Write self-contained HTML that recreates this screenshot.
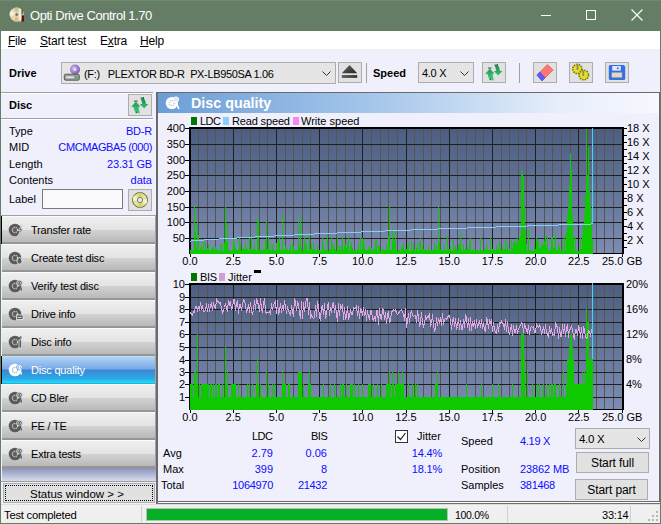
<!DOCTYPE html>
<html><head><meta charset="utf-8">
<style>
*{margin:0;padding:0;box-sizing:border-box}
html,body{width:661px;height:524px;overflow:hidden;background:#f0f0fc;font-family:"Liberation Sans",sans-serif;font-size:11px;color:#000}
.a{position:absolute}
.t{position:absolute;white-space:pre;line-height:1}
.ax{position:absolute;white-space:pre;font-size:11px;line-height:12px;color:#000}
.blue{color:#0c0cff}
.btn{position:absolute;background:#e1e1e1;border:1px solid #adadad}
.nav{position:absolute;left:2px;width:154px;height:28px;background:linear-gradient(#fbfbfb 0px,#fbfbfb 1px,#efefef 1px,#e3e3e3 14px,#d3d3d3 14px,#b8b8b8 26px,#9c9c9c 26px,#909090 28px);box-shadow:inset -1px 0 #a4a4a4}
.nav .lbl{position:absolute;left:29px;top:9px;font-size:11px;white-space:pre;line-height:1;letter-spacing:-0.2px}
.nav svg{position:absolute;left:7px;top:7px}
</style></head><body>
<!-- title bar -->
<div class="a" style="left:0;top:0;width:661px;height:31px;background:#657d65;border-top:1px solid #71886f"></div>
<svg class="a" style="left:9px;top:7px" width="17" height="16" viewBox="0 0 17 16">
 <circle cx="7.7" cy="7.6" r="7.1" fill="#e6d8ac"/>
 <path d="M7.7 7.6L2 3.5A7 7 0 0 0 0.8 9Z" fill="#f8f0d4"/><path d="M7.7 7.6L12.5 12.6A7 7 0 0 0 14.6 8Z" fill="#f6ecc8"/>
 <path d="M7.7 7.6L5 0.9A7 7 0 0 1 10 0.9Z" fill="#d2c08a"/><path d="M7.7 7.6L10 14.3A7 7 0 0 1 5 14.3Z" fill="#d2c08a"/>
 <circle cx="7.7" cy="7.6" r="1.9" fill="#6a7a6a" stroke="#e0e0e0" stroke-width="0.9"/>
 <path d="M10.8 2L11.4 14.5" stroke="#f0f0f0" stroke-width="1.6"/><rect x="12.6" y="8.3" width="2.4" height="6.2" fill="#6a0a0a"/><rect x="12.6" y="2.5" width="1" height="5" fill="#303030"/>
</svg>
<div class="t" style="left:30px;top:9px;font-size:13px;color:#fff;letter-spacing:-0.45px">Opti Drive Control 1.70</div>
<div class="a" style="left:541px;top:15px;width:10px;height:1px;background:#fff"></div>
<div class="a" style="left:586px;top:10px;width:10px;height:10px;border:1px solid #fff"></div>
<svg class="a" style="left:631px;top:9px" width="12" height="12"><path d="M0.5 0.5L11.5 11.5M11.5 0.5L0.5 11.5" stroke="#fff" stroke-width="1.1"/></svg>
<!-- window border -->
<div class="a" style="left:0;top:31px;width:1px;height:493px;background:#657d65"></div>
<div class="a" style="left:660px;top:31px;width:1px;height:493px;background:#657d65"></div>
<div class="a" style="left:0;top:523px;width:661px;height:1px;background:#657d65"></div>
<!-- menu -->
<div class="a" style="left:1px;top:31px;width:659px;height:18px;background:#fff"></div>
<div class="a" style="left:1px;top:49px;width:659px;height:1px;background:#f0f0f0"></div>
<div class="t" style="left:8px;top:35px;font-size:12px;letter-spacing:-0.3px"><u>F</u>ile</div>
<div class="t" style="left:40px;top:35px;font-size:12px;letter-spacing:-0.2px"><u>S</u>tart test</div>
<div class="t" style="left:100px;top:35px;font-size:12px;letter-spacing:-0.2px">E<u>x</u>tra</div>
<div class="t" style="left:140px;top:35px;font-size:12px;letter-spacing:-0.2px"><u>H</u>elp</div>
<!-- toolbar -->
<div class="t" style="left:9px;top:68px;font-size:11px;font-weight:bold">Drive</div>
<div class="btn" style="left:61px;top:62px;width:275px;height:22px;background:#e5e5e5;border-color:#acacac"></div>
<svg class="a" style="left:63px;top:63px" width="18" height="18" viewBox="0 0 18 18">
 <defs><radialGradient id="dv" cx="0.4" cy="0.4" r="0.7"><stop offset="0" stop-color="#d8c8f0"/><stop offset="0.6" stop-color="#9878c8"/><stop offset="1" stop-color="#6a50a0"/></radialGradient></defs>
 <circle cx="12" cy="6.5" r="5" fill="url(#dv)"/><circle cx="12" cy="6.5" r="1.2" fill="#f0e8ff"/>
 <rect x="1.3" y="11.2" width="15" height="6" rx="1.3" fill="#9a9a9a" stroke="#505050" stroke-width="0.9"/><rect x="3.2" y="13.4" width="7.5" height="1.8" fill="#e8e8e8"/><circle cx="13.5" cy="14.3" r="1.1" fill="#20c040"/>
</svg>
<div class="t" style="left:84px;top:69px;font-size:11px;letter-spacing:-0.35px">(F:)   PLEXTOR BD-R  PX-LB950SA 1.06</div>
<svg class="a" style="left:322px;top:71px" width="9" height="5"><path d="M0.5 0.5L4.5 4.5L8.5 0.5" fill="none" stroke="#333" stroke-width="1"/></svg>
<div class="btn" style="left:338px;top:62px;width:24px;height:21px;background:#e1e1e1"></div>
<svg class="a" style="left:338px;top:62px" width="24" height="21" viewBox="0 0 24 21">
 <defs><linearGradient id="ej" x1="0" y1="0" x2="1" y2="1"><stop offset="0" stop-color="#707070"/><stop offset="1" stop-color="#202020"/></linearGradient></defs>
 <path d="M11.5 3L19.2 11.3H3.8Z" fill="url(#ej)"/><rect x="3.8" y="13" width="15.4" height="2.8" fill="url(#ej)"/>
</svg>
<div class="a" style="left:366px;top:63px;width:1px;height:20px;background:#a0a0a0"></div>
<div class="t" style="left:373px;top:68px;font-size:11px;font-weight:bold">Speed</div>
<div class="btn" style="left:418px;top:62px;width:56px;height:21px;background:#e5e5e5;border-color:#acacac"></div>
<div class="t" style="left:422px;top:68px;font-size:11px;letter-spacing:-0.3px">4.0 X</div>
<svg class="a" style="left:460px;top:71px" width="9" height="5"><path d="M0.5 0.5L4.5 4.5L8.5 0.5" fill="none" stroke="#333" stroke-width="1"/></svg>
<div class="btn" style="left:482px;top:62px;width:24px;height:21px"></div>
<svg class="a" style="left:482px;top:62px" width="24" height="21" viewBox="0 0 24 21">
 <defs><linearGradient id="ga1" x1="0" y1="0" x2="0" y2="1"><stop offset="0" stop-color="#1e9a50"/><stop offset="1" stop-color="#40d080"/></linearGradient>
 <linearGradient id="gb1" x1="0" y1="0" x2="0" y2="1"><stop offset="0" stop-color="#20804a"/><stop offset="1" stop-color="#38c870"/></linearGradient></defs>
 <path d="M7.9 6.8L12.6 11.7L10.4 11.7Q10.9 15 12 18.2L7.4 18.2Q6.3 14.8 5.3 11.7L3.2 11.7Z" fill="url(#ga1)"/>
 <path d="M12.4 2.6L15.6 2.6Q17.4 5.5 18.1 9L20.5 9L16.2 13.6L11.8 9L14.2 9Q13.6 5.6 12.4 2.6Z" fill="url(#gb1)"/>
 <rect x="6" y="5.6" width="3.5" height="1" fill="#404040"/><rect x="15" y="2" width="1" height="1.5" fill="#505050"/><rect x="8" y="16.5" width="1" height="1.5" fill="#505050"/>
</svg>
<div class="a" style="left:519px;top:63px;width:1px;height:20px;background:#a0a0a0"></div>
<div class="btn" style="left:533px;top:62px;width:24px;height:21px"></div>
<svg class="a" style="left:533px;top:62px" width="24" height="21" viewBox="0 0 24 21">
 <path d="M14.5 2.5L20.2 8L12.1 15.9L6.8 10.1Z" fill="#ff7676" stroke="#c04848" stroke-width="0.5"/>
 <path d="M6.8 10.1L12.1 15.9L9 19L3.8 13Z" fill="#5a5aff" stroke="#3030b0" stroke-width="0.5"/>
</svg>
<div class="btn" style="left:569px;top:62px;width:24px;height:21px"></div>
<svg class="a" style="left:569px;top:62px" width="24" height="21" viewBox="0 0 24 21">
 <circle cx="8.3" cy="7" r="4.6" fill="#e6e020" stroke="#7a7410" stroke-width="1.6" stroke-dasharray="1.5 1"/>
 <circle cx="14.8" cy="13" r="4.8" fill="#e6e020" stroke="#7a7410" stroke-width="1.6" stroke-dasharray="1.5 1"/>
 <rect x="7.6" y="3" width="1.8" height="5" fill="#8a8a80"/><rect x="13.4" y="9" width="1.8" height="5" fill="#8a8a80"/>
</svg>
<div class="btn" style="left:605px;top:62px;width:24px;height:21px"></div>
<svg class="a" style="left:605px;top:62px" width="24" height="21" viewBox="0 0 24 21">
 <path d="M5.2 3H18.6L20.2 4.6V16.4Q20.2 18 18.6 18H5.4Q3.8 18 3.8 16.4V4.6Q3.8 3 5.2 3Z" fill="#2f6ff0"/>
 <rect x="7.2" y="4" width="8.6" height="4.6" fill="#e4e8f0"/><circle cx="12.8" cy="6.3" r="1" fill="#2f6ff0"/>
 <rect x="6.3" y="10.1" width="11" height="5.8" fill="#d8d8d8" stroke="#707070" stroke-width="0.8"/>
</svg>

<!-- left panel -->
<div class="a" style="left:1px;top:92px;width:152px;height:1px;background:#a0a0a0"></div>
<div class="a" style="left:1px;top:93px;width:152px;height:1px;background:#fff"></div>
<div class="t" style="left:9px;top:100px;font-size:11px;font-weight:bold">Disc</div>
<div class="btn" style="left:128px;top:94px;width:24px;height:22px"></div>
<svg class="a" style="left:128px;top:95px" width="24" height="21" viewBox="0 0 24 21">
 <defs><linearGradient id="ga2" x1="0" y1="0" x2="0" y2="1"><stop offset="0" stop-color="#1e9a50"/><stop offset="1" stop-color="#40d080"/></linearGradient>
 <linearGradient id="gb2" x1="0" y1="0" x2="0" y2="1"><stop offset="0" stop-color="#20804a"/><stop offset="1" stop-color="#38c870"/></linearGradient></defs>
 <path d="M7.9 6.8L12.6 11.7L10.4 11.7Q10.9 15 12 18.2L7.4 18.2Q6.3 14.8 5.3 11.7L3.2 11.7Z" fill="url(#ga2)"/>
 <path d="M12.4 2.6L15.6 2.6Q17.4 5.5 18.1 9L20.5 9L16.2 13.6L11.8 9L14.2 9Q13.6 5.6 12.4 2.6Z" fill="url(#gb2)"/>
 <rect x="6" y="5.6" width="3.5" height="1" fill="#404040"/><rect x="15" y="2" width="1" height="1.5" fill="#505050"/><rect x="8" y="16.5" width="1" height="1.5" fill="#505050"/>
</svg>
<div class="a" style="left:1px;top:118px;width:152px;height:1px;background:#a0a0a0"></div>
<div class="a" style="left:1px;top:119px;width:152px;height:1px;background:#fff"></div>
<div class="t" style="left:9px;top:126px">Type</div>
<div class="t blue" style="left:51px;top:126px;width:101px;text-align:right;letter-spacing:-0.2px">BD-R</div>
<div class="t" style="left:9px;top:142px">MID</div>
<div class="t blue" style="left:41px;top:142px;width:111px;text-align:right;letter-spacing:-0.4px">CMCMAGBA5 (000)</div>
<div class="t" style="left:9px;top:159px">Length</div>
<div class="t blue" style="left:51px;top:159px;width:101px;text-align:right;letter-spacing:-0.2px">23.31 GB</div>
<div class="t" style="left:9px;top:175px">Contents</div>
<div class="t blue" style="left:51px;top:175px;width:101px;text-align:right">data</div>
<div class="t" style="left:9px;top:194px">Label</div>
<div class="a" style="left:42px;top:189px;width:81px;height:20px;background:#fafafd;border:1px solid #7a7a7a"></div>
<div class="btn" style="left:128px;top:189px;width:24px;height:22px"></div>
<svg class="a" style="left:128px;top:189px" width="24" height="22" viewBox="0 0 24 22">
 <circle cx="12" cy="11" r="7.5" fill="#e2e290" stroke="#505038" stroke-width="0.9"/>
 <path d="M12 11L6 6.5A7.3 7.3 0 0 0 4.8 12Z" fill="#f4f4c8"/><path d="M12 11L18 15.5A7.3 7.3 0 0 0 19.2 10Z" fill="#f4f4c8"/>
 <path d="M12 11L9.5 3.9A7.3 7.3 0 0 1 14.5 3.9Z" fill="#cfcf78"/><path d="M12 11L14.5 18.1A7.3 7.3 0 0 1 9.5 18.1Z" fill="#cfcf78"/>
 <circle cx="12" cy="11" r="2.6" fill="#e6ece0" stroke="#6a6e78" stroke-width="0.9"/>
</svg>
<div class="a" style="left:1px;top:215px;width:155px;height:1px;background:#a0a0a0"></div>

<div class="nav" style="top:216px"><div style="position:absolute;left:-1px;top:0;width:1px;height:28px;background:#000"></div><svg width="18" height="16" viewBox="0 0 18 16" style="left:5px;top:6px"><circle cx="8" cy="8" r="6.3" fill="#5c5c5c"/><circle cx="8" cy="8" r="2.6" fill="none" stroke="#d8d8d8" stroke-width="1.2" stroke-dasharray="1.2 0.9"/><path d="M15.5 1.5L11.5 8.5L13.5 8.5L10.5 14.5L16 7L14 7Z" fill="#5c5c5c" stroke="#e0e0e0" stroke-width="0.8"/></svg><div class="lbl" style="color:#000">Transfer rate</div></div><div class="nav" style="top:244px"><svg width="18" height="16" viewBox="0 0 18 16" style="left:5px;top:6px"><circle cx="8" cy="8" r="6.3" fill="#5c5c5c"/><circle cx="8" cy="8" r="2.6" fill="none" stroke="#d8d8d8" stroke-width="1.2" stroke-dasharray="1.2 0.9"/><path d="M12.5 7Q15 9 15 11.5Q15 14 12.5 14Q10 14 10 11.5Q10 9 12.5 7Z" fill="#5c5c5c" stroke="#e0e0e0" stroke-width="0.9"/></svg><div class="lbl" style="color:#000">Create test disc</div></div><div class="nav" style="top:272px"><svg width="18" height="16" viewBox="0 0 18 16" style="left:5px;top:6px"><circle cx="8" cy="8" r="6.3" fill="#5c5c5c"/><circle cx="8" cy="8" r="2.6" fill="none" stroke="#d8d8d8" stroke-width="1.2" stroke-dasharray="1.2 0.9"/><circle cx="12.5" cy="5" r="2.8" fill="#5c5c5c" stroke="#e0e0e0" stroke-width="0.9"/><circle cx="12.5" cy="5" r="1.3" fill="none" stroke="#d8d8d8" stroke-width="0.7"/><path d="M13 7.5L14.5 12.5" stroke="#5c5c5c" stroke-width="1.4"/></svg><div class="lbl" style="color:#000">Verify test disc</div></div><div class="nav" style="top:300px"><svg width="18" height="16" viewBox="0 0 18 16" style="left:5px;top:6px"><circle cx="8" cy="8" r="6.3" fill="#5c5c5c"/><circle cx="8" cy="8" r="2.6" fill="none" stroke="#d8d8d8" stroke-width="1.2" stroke-dasharray="1.2 0.9"/><rect x="9.5" y="9" width="6.5" height="4.5" fill="#5c5c5c" stroke="#e0e0e0" stroke-width="0.9"/><rect x="10.5" y="11" width="4" height="1" fill="#d8d8d8"/></svg><div class="lbl" style="color:#000">Drive info</div></div><div class="nav" style="top:328px"><svg width="18" height="16" viewBox="0 0 18 16" style="left:5px;top:6px"><circle cx="8" cy="8" r="6.3" fill="#5c5c5c"/><circle cx="8" cy="8" r="2.6" fill="none" stroke="#d8d8d8" stroke-width="1.2" stroke-dasharray="1.2 0.9"/><rect x="12" y="6" width="2.6" height="8" fill="#5c5c5c" stroke="#e0e0e0" stroke-width="0.8"/><rect x="12.5" y="2.5" width="2" height="2" fill="#5c5c5c"/></svg><div class="lbl" style="color:#000">Disc info</div></div><div class="nav" style="top:356px;background:linear-gradient(#cfe6fb 0%,#b0d2f4 4%,#7aaae6 46%,#3f86d2 50%,#2aa8e6 80%,#1edcfa 96%,#2a8ab8 100%)"><div style="position:absolute;left:-1px;top:0;width:1px;height:28px;background:#000"></div><svg width="18" height="16" viewBox="0 0 18 16" style="left:5px;top:6px"><circle cx="8" cy="8" r="6.3" fill="#fff"/><circle cx="8" cy="8" r="2.6" fill="none" stroke="#7fb0e6" stroke-width="1.2" stroke-dasharray="1.2 0.9"/><circle cx="12.5" cy="5" r="2.8" fill="#fff" stroke="#6aa4e0" stroke-width="0.9"/><circle cx="12.5" cy="5" r="1.3" fill="none" stroke="#7fb0e6" stroke-width="0.7"/><path d="M13 7.5L14.5 12.5" stroke="#fff" stroke-width="1.4"/></svg><div class="lbl" style="color:#fff">Disc quality</div></div><div class="nav" style="top:384px"><svg width="18" height="16" viewBox="0 0 18 16" style="left:5px;top:6px"><circle cx="8" cy="8" r="6.3" fill="#5c5c5c"/><circle cx="8" cy="8" r="2.6" fill="none" stroke="#d8d8d8" stroke-width="1.2" stroke-dasharray="1.2 0.9"/><circle cx="12.5" cy="5" r="2.8" fill="#5c5c5c" stroke="#e0e0e0" stroke-width="0.9"/><circle cx="12.5" cy="5" r="1.3" fill="none" stroke="#d8d8d8" stroke-width="0.7"/><path d="M13 7.5L14.5 12.5" stroke="#5c5c5c" stroke-width="1.4"/></svg><div class="lbl" style="color:#000">CD Bler</div></div><div class="nav" style="top:412px"><svg width="18" height="16" viewBox="0 0 18 16" style="left:5px;top:6px"><circle cx="8" cy="8" r="6.3" fill="#5c5c5c"/><circle cx="8" cy="8" r="2.6" fill="none" stroke="#d8d8d8" stroke-width="1.2" stroke-dasharray="1.2 0.9"/><circle cx="12.5" cy="5" r="2.8" fill="#5c5c5c" stroke="#e0e0e0" stroke-width="0.9"/><circle cx="12.5" cy="5" r="1.3" fill="none" stroke="#d8d8d8" stroke-width="0.7"/><path d="M13 7.5L14.5 12.5" stroke="#5c5c5c" stroke-width="1.4"/></svg><div class="lbl" style="color:#000">FE / TE</div></div><div class="nav" style="top:440px"><svg width="18" height="16" viewBox="0 0 18 16" style="left:5px;top:6px"><circle cx="8" cy="8" r="6.3" fill="#5c5c5c"/><circle cx="8" cy="8" r="2.6" fill="none" stroke="#d8d8d8" stroke-width="1.2" stroke-dasharray="1.2 0.9"/><circle cx="12.5" cy="5" r="2.8" fill="#5c5c5c" stroke="#e0e0e0" stroke-width="0.9"/><circle cx="12.5" cy="5" r="1.3" fill="none" stroke="#d8d8d8" stroke-width="0.7"/><path d="M13 7.5L14.5 12.5" stroke="#5c5c5c" stroke-width="1.4"/></svg><div class="lbl" style="color:#000">Extra tests</div></div>

<div class="a" style="left:2px;top:468px;width:154px;height:13px;background:linear-gradient(#8a94b8,#d8dcec)"></div>
<div class="a" style="left:1px;top:481px;width:155px;height:1px;background:#a0a0a0"></div>
<div class="btn" style="left:3px;top:483px;width:152px;height:20px;background:#e1e1e1"></div>
<div class="a" style="left:5px;top:485px;width:148px;height:16px;border:1px dotted #000"></div>
<div class="t" style="left:1px;top:489px;width:152px;text-align:center;font-size:11.5px">Status window &gt; &gt;</div>

<!-- left/right separator -->
<div class="a" style="left:156px;top:92px;width:2px;height:411px;background:#6a6a6a"></div>
<!-- main panel frame -->
<div class="a" style="left:156px;top:92px;width:504px;height:1px;background:#6a6a6a"></div>
<div class="a" style="left:659px;top:92px;width:1px;height:411px;background:#6a6a6a"></div>
<div class="a" style="left:156px;top:501px;width:504px;height:1px;background:#6a6a6a"></div><div class="a" style="left:158px;top:502px;width:502px;height:1px;background:#fff"></div><div class="a" style="left:156px;top:503px;width:504px;height:1px;background:#707070"></div><div class="a" style="left:156px;top:501px;width:2px;height:3px;background:#6a6a6a"></div>
<div class="a" style="left:158px;top:93px;width:501px;height:20px;background:linear-gradient(90deg,#6c9ed6 0%,#a8c8ec 45%,#e6eefa 80%,#f8f8fe 100%)"></div>
<svg class="a" style="left:163px;top:95px" width="18" height="16" viewBox="0 0 18 16">
 <circle cx="8.8" cy="8.1" r="6.1" fill="#fff"/><circle cx="8.8" cy="8.1" r="2.6" fill="none" stroke="#9cc0e8" stroke-width="1.2" stroke-dasharray="1 1"/>
 <circle cx="13" cy="4.5" r="2.6" fill="#dfe9f6" stroke="#fff" stroke-width="1"/><path d="M13.2 7L15.8 14" stroke="#fff" stroke-width="1.6"/>
</svg>
<div class="t" style="left:191px;top:96px;font-size:14.3px;font-weight:bold;color:#fff">Disc quality</div>

<!-- legends -->
<div class="a" style="left:191px;top:117px;width:6px;height:8px;background:#007800"></div>
<div class="t" style="left:200px;top:116px;letter-spacing:-0.5px">LDC</div>
<div class="a" style="left:223px;top:117px;width:6px;height:8px;background:#88d0f8"></div>
<div class="t" style="left:232px;top:116px;letter-spacing:-0.15px">Read speed</div>
<div class="a" style="left:293px;top:117px;width:6px;height:8px;background:#f888f0"></div>
<div class="t" style="left:301px;top:116px">Write speed</div>

<div class="a" style="left:191px;top:273px;width:6px;height:8px;background:#007800"></div>
<div class="t" style="left:200px;top:272px;letter-spacing:-0.3px">BIS</div>
<div class="a" style="left:219px;top:273px;width:6px;height:8px;background:#d0a0d0"></div>
<div class="t" style="left:228px;top:272px">Jitter</div>
<div class="a" style="left:254px;top:270px;width:7px;height:3px;background:#000"></div>

<svg width="661" height="524" style="position:absolute;left:0;top:0">
<defs><linearGradient id="pg" x1="0" y1="0" x2="0" y2="1"><stop offset="0" stop-color="#4e5e80"/><stop offset="1" stop-color="#7c8cb2"/></linearGradient></defs>
<rect x="191" y="129" width="431" height="124" fill="url(#pg)"/><rect x="198" y="129" width="1" height="124" fill="#555555"/><rect x="207" y="129" width="1" height="124" fill="#555555"/><rect x="215" y="129" width="1" height="124" fill="#555555"/><rect x="224" y="129" width="1" height="124" fill="#555555"/><rect x="233" y="129" width="1" height="124" fill="#202020"/><rect x="241" y="129" width="1" height="124" fill="#555555"/><rect x="250" y="129" width="1" height="124" fill="#555555"/><rect x="259" y="129" width="1" height="124" fill="#555555"/><rect x="267" y="129" width="1" height="124" fill="#555555"/><rect x="276" y="129" width="1" height="124" fill="#202020"/><rect x="285" y="129" width="1" height="124" fill="#555555"/><rect x="293" y="129" width="1" height="124" fill="#555555"/><rect x="302" y="129" width="1" height="124" fill="#555555"/><rect x="310" y="129" width="1" height="124" fill="#555555"/><rect x="319" y="129" width="1" height="124" fill="#202020"/><rect x="328" y="129" width="1" height="124" fill="#555555"/><rect x="336" y="129" width="1" height="124" fill="#555555"/><rect x="345" y="129" width="1" height="124" fill="#555555"/><rect x="354" y="129" width="1" height="124" fill="#555555"/><rect x="362" y="129" width="1" height="124" fill="#202020"/><rect x="371" y="129" width="1" height="124" fill="#555555"/><rect x="380" y="129" width="1" height="124" fill="#555555"/><rect x="388" y="129" width="1" height="124" fill="#555555"/><rect x="397" y="129" width="1" height="124" fill="#555555"/><rect x="406" y="129" width="1" height="124" fill="#202020"/><rect x="414" y="129" width="1" height="124" fill="#555555"/><rect x="423" y="129" width="1" height="124" fill="#555555"/><rect x="431" y="129" width="1" height="124" fill="#555555"/><rect x="440" y="129" width="1" height="124" fill="#555555"/><rect x="449" y="129" width="1" height="124" fill="#202020"/><rect x="457" y="129" width="1" height="124" fill="#555555"/><rect x="466" y="129" width="1" height="124" fill="#555555"/><rect x="475" y="129" width="1" height="124" fill="#555555"/><rect x="483" y="129" width="1" height="124" fill="#555555"/><rect x="492" y="129" width="1" height="124" fill="#202020"/><rect x="501" y="129" width="1" height="124" fill="#555555"/><rect x="509" y="129" width="1" height="124" fill="#555555"/><rect x="518" y="129" width="1" height="124" fill="#555555"/><rect x="526" y="129" width="1" height="124" fill="#555555"/><rect x="535" y="129" width="1" height="124" fill="#202020"/><rect x="544" y="129" width="1" height="124" fill="#555555"/><rect x="552" y="129" width="1" height="124" fill="#555555"/><rect x="561" y="129" width="1" height="124" fill="#555555"/><rect x="570" y="129" width="1" height="124" fill="#555555"/><rect x="578" y="129" width="1" height="124" fill="#202020"/><rect x="587" y="129" width="1" height="124" fill="#555555"/><rect x="596" y="129" width="1" height="124" fill="#555555"/><rect x="604" y="129" width="1" height="124" fill="#555555"/><rect x="613" y="129" width="1" height="124" fill="#555555"/><rect x="191" y="144" width="431" height="1" fill="#202020"/><rect x="191" y="160" width="431" height="1" fill="#202020"/><rect x="191" y="175" width="431" height="1" fill="#202020"/><rect x="191" y="191" width="431" height="1" fill="#202020"/><rect x="191" y="207" width="431" height="1" fill="#202020"/><rect x="191" y="222" width="431" height="1" fill="#202020"/><rect x="191" y="238" width="431" height="1" fill="#202020"/><rect x="189" y="127" width="435" height="2" fill="#000"/><rect x="189" y="127" width="2" height="127" fill="#000"/><rect x="622" y="127" width="2" height="127" fill="#000"/><rect x="189" y="253" width="435" height="1" fill="#000"/><path fill="#0ec900" shape-rendering="crispEdges" d="M190 250h1V254h-1zM191 249h1V254h-1zM192 250h1V254h-1zM193 251h1V254h-1zM194 204h1V254h-1zM195 232h1V254h-1zM196 249h1V254h-1zM197 221h1V254h-1zM198 235h1V254h-1zM199 250h1V254h-1zM200 248h1V254h-1zM201 246h1V254h-1zM202 250h1V254h-1zM203 240h1V254h-1zM204 250h1V254h-1zM205 242h1V254h-1zM206 249h1V254h-1zM207 248h1V254h-1zM208 244h1V254h-1zM209 250h1V254h-1zM210 251h1V254h-1zM211 248h1V254h-1zM212 249h1V254h-1zM213 246h1V254h-1zM214 250h1V254h-1zM215 247h1V254h-1zM216 249h1V254h-1zM217 249h1V254h-1zM218 251h1V254h-1zM219 251h1V254h-1zM220 244h1V254h-1zM221 251h1V254h-1zM222 244h1V254h-1zM223 251h1V254h-1zM224 243h1V254h-1zM225 207h1V254h-1zM226 242h1V254h-1zM227 223h1V254h-1zM228 249h1V254h-1zM229 251h1V254h-1zM230 251h1V254h-1zM231 251h1V254h-1zM232 249h1V254h-1zM233 239h1V254h-1zM234 243h1V254h-1zM235 248h1V254h-1zM236 250h1V254h-1zM237 251h1V254h-1zM238 249h1V254h-1zM239 238h1V254h-1zM240 244h1V254h-1zM241 251h1V254h-1zM242 249h1V254h-1zM243 248h1V254h-1zM244 250h1V254h-1zM245 243h1V254h-1zM246 248h1V254h-1zM247 249h1V254h-1zM248 251h1V254h-1zM249 236h1V254h-1zM250 249h1V254h-1zM251 238h1V254h-1zM252 250h1V254h-1zM253 249h1V254h-1zM254 245h1V254h-1zM255 250h1V254h-1zM256 251h1V254h-1zM257 218h1V254h-1zM258 221h1V254h-1zM259 250h1V254h-1zM260 250h1V254h-1zM261 251h1V254h-1zM262 249h1V254h-1zM263 250h1V254h-1zM264 249h1V254h-1zM265 240h1V254h-1zM266 222h1V254h-1zM267 249h1V254h-1zM268 238h1V254h-1zM269 250h1V254h-1zM270 244h1V254h-1zM271 251h1V254h-1zM272 244h1V254h-1zM273 250h1V254h-1zM274 250h1V254h-1zM275 251h1V254h-1zM276 243h1V254h-1zM277 250h1V254h-1zM278 239h1V254h-1zM279 237h1V254h-1zM280 249h1V254h-1zM281 251h1V254h-1zM282 214h1V254h-1zM283 249h1V254h-1zM284 250h1V254h-1zM285 246h1V254h-1zM286 247h1V254h-1zM287 250h1V254h-1zM288 251h1V254h-1zM289 249h1V254h-1zM290 243h1V254h-1zM291 251h1V254h-1zM292 244h1V254h-1zM293 246h1V254h-1zM294 251h1V254h-1zM295 250h1V254h-1zM296 250h1V254h-1zM297 250h1V254h-1zM298 222h1V254h-1zM299 246h1V254h-1zM300 216h1V254h-1zM301 248h1V254h-1zM302 251h1V254h-1zM303 250h1V254h-1zM304 237h1V254h-1zM305 243h1V254h-1zM306 246h1V254h-1zM307 250h1V254h-1zM308 251h1V254h-1zM309 235h1V254h-1zM310 249h1V254h-1zM311 244h1V254h-1zM312 249h1V254h-1zM313 243h1V254h-1zM314 249h1V254h-1zM315 250h1V254h-1zM316 251h1V254h-1zM317 246h1V254h-1zM318 250h1V254h-1zM319 250h1V254h-1zM320 251h1V254h-1zM321 251h1V254h-1zM322 238h1V254h-1zM323 246h1V254h-1zM324 250h1V254h-1zM325 250h1V254h-1zM326 250h1V254h-1zM327 234h1V254h-1zM328 251h1V254h-1zM329 250h1V254h-1zM330 249h1V254h-1zM331 237h1V254h-1zM332 243h1V254h-1zM333 249h1V254h-1zM334 246h1V254h-1zM335 250h1V254h-1zM336 251h1V254h-1zM337 237h1V254h-1zM338 250h1V254h-1zM339 246h1V254h-1zM340 250h1V254h-1zM341 246h1V254h-1zM342 237h1V254h-1zM343 249h1V254h-1zM344 245h1V254h-1zM345 244h1V254h-1zM346 248h1V254h-1zM347 243h1V254h-1zM348 236h1V254h-1zM349 251h1V254h-1zM350 246h1V254h-1zM351 242h1V254h-1zM352 248h1V254h-1zM353 250h1V254h-1zM354 250h1V254h-1zM355 250h1V254h-1zM356 251h1V254h-1zM357 249h1V254h-1zM358 243h1V254h-1zM359 251h1V254h-1zM360 238h1V254h-1zM361 249h1V254h-1zM362 238h1V254h-1zM363 239h1V254h-1zM364 245h1V254h-1zM365 249h1V254h-1zM366 251h1V254h-1zM367 250h1V254h-1zM368 249h1V254h-1zM369 246h1V254h-1zM370 250h1V254h-1zM371 248h1V254h-1zM372 249h1V254h-1zM373 250h1V254h-1zM374 249h1V254h-1zM375 241h1V254h-1zM376 240h1V254h-1zM377 251h1V254h-1zM378 246h1V254h-1zM379 245h1V254h-1zM380 251h1V254h-1zM381 251h1V254h-1zM382 249h1V254h-1zM383 249h1V254h-1zM384 250h1V254h-1zM385 250h1V254h-1zM386 243h1V254h-1zM387 250h1V254h-1zM388 236h1V254h-1zM389 205h1V254h-1zM390 250h1V254h-1zM391 250h1V254h-1zM392 228h1V254h-1zM393 239h1V254h-1zM394 242h1V254h-1zM395 232h1V254h-1zM396 250h1V254h-1zM397 251h1V254h-1zM398 250h1V254h-1zM399 250h1V254h-1zM400 251h1V254h-1zM401 247h1V254h-1zM402 247h1V254h-1zM403 243h1V254h-1zM404 250h1V254h-1zM405 249h1V254h-1zM406 249h1V254h-1zM407 245h1V254h-1zM408 243h1V254h-1zM409 251h1V254h-1zM410 251h1V254h-1zM411 242h1V254h-1zM412 250h1V254h-1zM413 244h1V254h-1zM414 250h1V254h-1zM415 251h1V254h-1zM416 248h1V254h-1zM417 244h1V254h-1zM418 251h1V254h-1zM419 242h1V254h-1zM420 238h1V254h-1zM421 250h1V254h-1zM422 246h1V254h-1zM423 249h1V254h-1zM424 250h1V254h-1zM425 249h1V254h-1zM426 251h1V254h-1zM427 250h1V254h-1zM428 246h1V254h-1zM429 250h1V254h-1zM430 251h1V254h-1zM431 250h1V254h-1zM432 250h1V254h-1zM433 249h1V254h-1zM434 243h1V254h-1zM435 250h1V254h-1zM436 245h1V254h-1zM437 250h1V254h-1zM438 207h1V254h-1zM439 242h1V254h-1zM440 249h1V254h-1zM441 248h1V254h-1zM442 250h1V254h-1zM443 251h1V254h-1zM444 245h1V254h-1zM445 250h1V254h-1zM446 251h1V254h-1zM447 236h1V254h-1zM448 249h1V254h-1zM449 249h1V254h-1zM450 247h1V254h-1zM451 251h1V254h-1zM452 251h1V254h-1zM453 240h1V254h-1zM454 250h1V254h-1zM455 246h1V254h-1zM456 249h1V254h-1zM457 250h1V254h-1zM458 244h1V254h-1zM459 245h1V254h-1zM460 234h1V254h-1zM461 249h1V254h-1zM462 251h1V254h-1zM463 244h1V254h-1zM464 250h1V254h-1zM465 249h1V254h-1zM466 250h1V254h-1zM467 247h1V254h-1zM468 249h1V254h-1zM469 243h1V254h-1zM470 238h1V254h-1zM471 251h1V254h-1zM472 250h1V254h-1zM473 249h1V254h-1zM474 251h1V254h-1zM475 250h1V254h-1zM476 250h1V254h-1zM477 250h1V254h-1zM478 250h1V254h-1zM479 251h1V254h-1zM480 238h1V254h-1zM481 250h1V254h-1zM482 251h1V254h-1zM483 251h1V254h-1zM484 248h1V254h-1zM485 250h1V254h-1zM486 243h1V254h-1zM487 249h1V254h-1zM488 250h1V254h-1zM489 250h1V254h-1zM490 237h1V254h-1zM491 250h1V254h-1zM492 249h1V254h-1zM493 249h1V254h-1zM494 250h1V254h-1zM495 250h1V254h-1zM496 245h1V254h-1zM497 250h1V254h-1zM498 248h1V254h-1zM499 242h1V254h-1zM500 249h1V254h-1zM501 250h1V254h-1zM502 246h1V254h-1zM503 250h1V254h-1zM504 249h1V254h-1zM505 240h1V254h-1zM506 249h1V254h-1zM507 244h1V254h-1zM508 251h1V254h-1zM509 249h1V254h-1zM510 251h1V254h-1zM511 240h1V254h-1zM512 249h1V254h-1zM513 242h1V254h-1zM514 241h1V254h-1zM515 242h1V254h-1zM516 244h1V254h-1zM517 237h1V254h-1zM518 240h1V254h-1zM519 238h1V254h-1zM520 236h1V254h-1zM521 171h1V254h-1zM522 174h1V254h-1zM523 177h1V254h-1zM524 207h1V254h-1zM525 230h1V254h-1zM526 244h1V254h-1zM527 251h1V254h-1zM528 230h1V254h-1zM529 250h1V254h-1zM530 251h1V254h-1zM531 250h1V254h-1zM532 251h1V254h-1zM533 251h1V254h-1zM534 243h1V254h-1zM535 249h1V254h-1zM536 238h1V254h-1zM537 239h1V254h-1zM538 241h1V254h-1zM539 249h1V254h-1zM540 247h1V254h-1zM541 245h1V254h-1zM542 242h1V254h-1zM543 245h1V254h-1zM544 241h1V254h-1zM545 236h1V254h-1zM546 248h1V254h-1zM547 236h1V254h-1zM548 250h1V254h-1zM549 251h1V254h-1zM550 249h1V254h-1zM551 238h1V254h-1zM552 237h1V254h-1zM553 248h1V254h-1zM554 247h1V254h-1zM555 233h1V254h-1zM556 250h1V254h-1zM557 250h1V254h-1zM558 243h1V254h-1zM559 247h1V254h-1zM560 250h1V254h-1zM561 250h1V254h-1zM562 240h1V254h-1zM563 251h1V254h-1zM564 235h1V254h-1zM565 250h1V254h-1zM566 232h1V254h-1zM567 215h1V254h-1zM568 206h1V254h-1zM569 185h1V254h-1zM570 153h1V254h-1zM571 170h1V254h-1zM572 215h1V254h-1zM573 238h1V254h-1zM574 251h1V254h-1zM575 236h1V254h-1zM576 251h1V254h-1zM577 251h1V254h-1zM578 251h1V254h-1zM579 250h1V254h-1zM580 238h1V254h-1zM581 249h1V254h-1zM582 235h1V254h-1zM583 225h1V254h-1zM584 215h1V254h-1zM585 196h1V254h-1zM586 129h1V254h-1zM587 175h1V254h-1zM588 147h1V254h-1zM589 190h1V254h-1zM590 205h1V254h-1zM591 222h1V254h-1zM592 240h1V254h-1z"/><rect x="190" y="241" width="1" height="1" fill="#88ccf8"/><rect x="191" y="240" width="13" height="1" fill="#88ccf8"/><rect x="204" y="239" width="15" height="1" fill="#88ccf8"/><rect x="219" y="238" width="18" height="1" fill="#88ccf8"/><rect x="237" y="237" width="18" height="1" fill="#88ccf8"/><rect x="255" y="236" width="19" height="1" fill="#88ccf8"/><rect x="274" y="235" width="20" height="1" fill="#88ccf8"/><rect x="294" y="234" width="20" height="1" fill="#88ccf8"/><rect x="314" y="233" width="23" height="1" fill="#88ccf8"/><rect x="337" y="232" width="24" height="1" fill="#88ccf8"/><rect x="361" y="231" width="24" height="1" fill="#88ccf8"/><rect x="385" y="230" width="26" height="1" fill="#88ccf8"/><rect x="411" y="229" width="27" height="1" fill="#88ccf8"/><rect x="438" y="228" width="29" height="1" fill="#88ccf8"/><rect x="467" y="227" width="29" height="1" fill="#88ccf8"/><rect x="496" y="226" width="31" height="1" fill="#88ccf8"/><rect x="527" y="225" width="31" height="1" fill="#88ccf8"/><rect x="558" y="224" width="33" height="1" fill="#88ccf8"/><rect x="591" y="223" width="1" height="1" fill="#88ccf8"/><rect x="592" y="128" width="1" height="96" fill="#44d4f8"/>
<rect x="191" y="285" width="431" height="124" fill="url(#pg)"/><rect x="198" y="285" width="1" height="124" fill="#555555"/><rect x="207" y="285" width="1" height="124" fill="#555555"/><rect x="215" y="285" width="1" height="124" fill="#555555"/><rect x="224" y="285" width="1" height="124" fill="#555555"/><rect x="233" y="285" width="1" height="124" fill="#202020"/><rect x="241" y="285" width="1" height="124" fill="#555555"/><rect x="250" y="285" width="1" height="124" fill="#555555"/><rect x="259" y="285" width="1" height="124" fill="#555555"/><rect x="267" y="285" width="1" height="124" fill="#555555"/><rect x="276" y="285" width="1" height="124" fill="#202020"/><rect x="285" y="285" width="1" height="124" fill="#555555"/><rect x="293" y="285" width="1" height="124" fill="#555555"/><rect x="302" y="285" width="1" height="124" fill="#555555"/><rect x="310" y="285" width="1" height="124" fill="#555555"/><rect x="319" y="285" width="1" height="124" fill="#202020"/><rect x="328" y="285" width="1" height="124" fill="#555555"/><rect x="336" y="285" width="1" height="124" fill="#555555"/><rect x="345" y="285" width="1" height="124" fill="#555555"/><rect x="354" y="285" width="1" height="124" fill="#555555"/><rect x="362" y="285" width="1" height="124" fill="#202020"/><rect x="371" y="285" width="1" height="124" fill="#555555"/><rect x="380" y="285" width="1" height="124" fill="#555555"/><rect x="388" y="285" width="1" height="124" fill="#555555"/><rect x="397" y="285" width="1" height="124" fill="#555555"/><rect x="406" y="285" width="1" height="124" fill="#202020"/><rect x="414" y="285" width="1" height="124" fill="#555555"/><rect x="423" y="285" width="1" height="124" fill="#555555"/><rect x="431" y="285" width="1" height="124" fill="#555555"/><rect x="440" y="285" width="1" height="124" fill="#555555"/><rect x="449" y="285" width="1" height="124" fill="#202020"/><rect x="457" y="285" width="1" height="124" fill="#555555"/><rect x="466" y="285" width="1" height="124" fill="#555555"/><rect x="475" y="285" width="1" height="124" fill="#555555"/><rect x="483" y="285" width="1" height="124" fill="#555555"/><rect x="492" y="285" width="1" height="124" fill="#202020"/><rect x="501" y="285" width="1" height="124" fill="#555555"/><rect x="509" y="285" width="1" height="124" fill="#555555"/><rect x="518" y="285" width="1" height="124" fill="#555555"/><rect x="526" y="285" width="1" height="124" fill="#555555"/><rect x="535" y="285" width="1" height="124" fill="#202020"/><rect x="544" y="285" width="1" height="124" fill="#555555"/><rect x="552" y="285" width="1" height="124" fill="#555555"/><rect x="561" y="285" width="1" height="124" fill="#555555"/><rect x="570" y="285" width="1" height="124" fill="#555555"/><rect x="578" y="285" width="1" height="124" fill="#202020"/><rect x="587" y="285" width="1" height="124" fill="#555555"/><rect x="596" y="285" width="1" height="124" fill="#555555"/><rect x="604" y="285" width="1" height="124" fill="#555555"/><rect x="613" y="285" width="1" height="124" fill="#555555"/><rect x="191" y="297" width="431" height="1" fill="#202020"/><rect x="191" y="309" width="431" height="1" fill="#202020"/><rect x="191" y="322" width="431" height="1" fill="#202020"/><rect x="191" y="334" width="431" height="1" fill="#202020"/><rect x="191" y="347" width="431" height="1" fill="#202020"/><rect x="191" y="360" width="431" height="1" fill="#202020"/><rect x="191" y="372" width="431" height="1" fill="#202020"/><rect x="191" y="384" width="431" height="1" fill="#202020"/><rect x="191" y="397" width="431" height="1" fill="#202020"/><rect x="189" y="283" width="435" height="2" fill="#000"/><rect x="189" y="283" width="2" height="127" fill="#000"/><rect x="622" y="283" width="2" height="127" fill="#000"/><rect x="189" y="409" width="435" height="1" fill="#000"/><path fill="#0ec900" shape-rendering="crispEdges" d="M190 384h1V410h-1zM191 384h1V410h-1zM192 384h1V410h-1zM193 397h1V410h-1zM194 372h1V410h-1zM195 372h1V410h-1zM196 384h1V410h-1zM197 334h1V410h-1zM198 397h1V410h-1zM199 384h1V410h-1zM200 397h1V410h-1zM201 384h1V410h-1zM202 384h1V410h-1zM203 384h1V410h-1zM204 384h1V410h-1zM205 384h1V410h-1zM206 384h1V410h-1zM207 384h1V410h-1zM208 384h1V410h-1zM209 397h1V410h-1zM210 384h1V410h-1zM211 384h1V410h-1zM212 397h1V410h-1zM213 384h1V410h-1zM214 397h1V410h-1zM215 384h1V410h-1zM216 384h1V410h-1zM217 397h1V410h-1zM218 384h1V410h-1zM219 384h1V410h-1zM220 397h1V410h-1zM221 397h1V410h-1zM222 384h1V410h-1zM223 397h1V410h-1zM224 397h1V410h-1zM225 347h1V410h-1zM226 384h1V410h-1zM227 372h1V410h-1zM228 397h1V410h-1zM229 397h1V410h-1zM230 397h1V410h-1zM231 384h1V410h-1zM232 384h1V410h-1zM233 384h1V410h-1zM234 384h1V410h-1zM235 384h1V410h-1zM236 397h1V410h-1zM237 397h1V410h-1zM238 384h1V410h-1zM239 397h1V410h-1zM240 397h1V410h-1zM241 397h1V410h-1zM242 397h1V410h-1zM243 397h1V410h-1zM244 397h1V410h-1zM245 397h1V410h-1zM246 397h1V410h-1zM247 384h1V410h-1zM248 397h1V410h-1zM249 384h1V410h-1zM250 397h1V410h-1zM251 397h1V410h-1zM252 384h1V410h-1zM253 397h1V410h-1zM254 397h1V410h-1zM255 397h1V410h-1zM256 384h1V410h-1zM257 359h1V410h-1zM258 384h1V410h-1zM259 397h1V410h-1zM260 384h1V410h-1zM261 397h1V410h-1zM262 397h1V410h-1zM263 397h1V410h-1zM264 397h1V410h-1zM265 397h1V410h-1zM266 372h1V410h-1zM267 397h1V410h-1zM268 384h1V410h-1zM269 397h1V410h-1zM270 397h1V410h-1zM271 397h1V410h-1zM272 384h1V410h-1zM273 397h1V410h-1zM274 384h1V410h-1zM275 397h1V410h-1zM276 397h1V410h-1zM277 397h1V410h-1zM278 397h1V410h-1zM279 397h1V410h-1zM280 397h1V410h-1zM281 397h1V410h-1zM282 372h1V410h-1zM283 384h1V410h-1zM284 384h1V410h-1zM285 384h1V410h-1zM286 397h1V410h-1zM287 397h1V410h-1zM288 384h1V410h-1zM289 384h1V410h-1zM290 397h1V410h-1zM291 397h1V410h-1zM292 397h1V410h-1zM293 397h1V410h-1zM294 397h1V410h-1zM295 397h1V410h-1zM296 397h1V410h-1zM297 397h1V410h-1zM298 372h1V410h-1zM299 372h1V410h-1zM300 372h1V410h-1zM301 372h1V410h-1zM302 397h1V410h-1zM303 384h1V410h-1zM304 397h1V410h-1zM305 397h1V410h-1zM306 397h1V410h-1zM307 397h1V410h-1zM308 384h1V410h-1zM309 372h1V410h-1zM310 384h1V410h-1zM311 397h1V410h-1zM312 397h1V410h-1zM313 397h1V410h-1zM314 397h1V410h-1zM315 397h1V410h-1zM316 397h1V410h-1zM317 397h1V410h-1zM318 397h1V410h-1zM319 397h1V410h-1zM320 397h1V410h-1zM321 397h1V410h-1zM322 397h1V410h-1zM323 384h1V410h-1zM324 397h1V410h-1zM325 397h1V410h-1zM326 397h1V410h-1zM327 397h1V410h-1zM328 397h1V410h-1zM329 397h1V410h-1zM330 384h1V410h-1zM331 397h1V410h-1zM332 397h1V410h-1zM333 397h1V410h-1zM334 384h1V410h-1zM335 397h1V410h-1zM336 397h1V410h-1zM337 397h1V410h-1zM338 397h1V410h-1zM339 397h1V410h-1zM340 384h1V410h-1zM341 397h1V410h-1zM342 384h1V410h-1zM343 384h1V410h-1zM344 397h1V410h-1zM345 397h1V410h-1zM346 384h1V410h-1zM347 397h1V410h-1zM348 397h1V410h-1zM349 397h1V410h-1zM350 384h1V410h-1zM351 384h1V410h-1zM352 384h1V410h-1zM353 397h1V410h-1zM354 384h1V410h-1zM355 397h1V410h-1zM356 397h1V410h-1zM357 397h1V410h-1zM358 384h1V410h-1zM359 397h1V410h-1zM360 397h1V410h-1zM361 397h1V410h-1zM362 384h1V410h-1zM363 397h1V410h-1zM364 397h1V410h-1zM365 397h1V410h-1zM366 397h1V410h-1zM367 397h1V410h-1zM368 384h1V410h-1zM369 384h1V410h-1zM370 384h1V410h-1zM371 397h1V410h-1zM372 397h1V410h-1zM373 384h1V410h-1zM374 397h1V410h-1zM375 397h1V410h-1zM376 397h1V410h-1zM377 384h1V410h-1zM378 397h1V410h-1zM379 397h1V410h-1zM380 397h1V410h-1zM381 384h1V410h-1zM382 397h1V410h-1zM383 397h1V410h-1zM384 397h1V410h-1zM385 397h1V410h-1zM386 384h1V410h-1zM387 384h1V410h-1zM388 384h1V410h-1zM389 372h1V410h-1zM390 384h1V410h-1zM391 397h1V410h-1zM392 372h1V410h-1zM393 384h1V410h-1zM394 397h1V410h-1zM395 384h1V410h-1zM396 384h1V410h-1zM397 384h1V410h-1zM398 372h1V410h-1zM399 384h1V410h-1zM400 384h1V410h-1zM401 384h1V410h-1zM402 372h1V410h-1zM403 384h1V410h-1zM404 397h1V410h-1zM405 397h1V410h-1zM406 397h1V410h-1zM407 397h1V410h-1zM408 384h1V410h-1zM409 397h1V410h-1zM410 397h1V410h-1zM411 397h1V410h-1zM412 384h1V410h-1zM413 397h1V410h-1zM414 397h1V410h-1zM415 384h1V410h-1zM416 397h1V410h-1zM417 384h1V410h-1zM418 397h1V410h-1zM419 397h1V410h-1zM420 397h1V410h-1zM421 397h1V410h-1zM422 397h1V410h-1zM423 397h1V410h-1zM424 397h1V410h-1zM425 397h1V410h-1zM426 397h1V410h-1zM427 397h1V410h-1zM428 397h1V410h-1zM429 397h1V410h-1zM430 397h1V410h-1zM431 397h1V410h-1zM432 397h1V410h-1zM433 397h1V410h-1zM434 397h1V410h-1zM435 384h1V410h-1zM436 384h1V410h-1zM437 372h1V410h-1zM438 397h1V410h-1zM439 397h1V410h-1zM440 397h1V410h-1zM441 397h1V410h-1zM442 397h1V410h-1zM443 397h1V410h-1zM444 397h1V410h-1zM445 397h1V410h-1zM446 397h1V410h-1zM447 397h1V410h-1zM448 397h1V410h-1zM449 397h1V410h-1zM450 397h1V410h-1zM451 397h1V410h-1zM452 397h1V410h-1zM453 397h1V410h-1zM454 397h1V410h-1zM455 397h1V410h-1zM456 397h1V410h-1zM457 397h1V410h-1zM458 397h1V410h-1zM459 397h1V410h-1zM460 397h1V410h-1zM461 397h1V410h-1zM462 397h1V410h-1zM463 397h1V410h-1zM464 397h1V410h-1zM465 397h1V410h-1zM466 384h1V410h-1zM467 397h1V410h-1zM468 397h1V410h-1zM469 397h1V410h-1zM470 397h1V410h-1zM471 397h1V410h-1zM472 397h1V410h-1zM473 397h1V410h-1zM474 397h1V410h-1zM475 397h1V410h-1zM476 397h1V410h-1zM477 397h1V410h-1zM478 397h1V410h-1zM479 397h1V410h-1zM480 397h1V410h-1zM481 384h1V410h-1zM482 397h1V410h-1zM483 397h1V410h-1zM484 397h1V410h-1zM485 397h1V410h-1zM486 397h1V410h-1zM487 397h1V410h-1zM488 397h1V410h-1zM489 397h1V410h-1zM490 397h1V410h-1zM491 397h1V410h-1zM492 384h1V410h-1zM493 397h1V410h-1zM494 397h1V410h-1zM495 397h1V410h-1zM496 397h1V410h-1zM497 397h1V410h-1zM498 384h1V410h-1zM499 397h1V410h-1zM500 397h1V410h-1zM501 397h1V410h-1zM502 397h1V410h-1zM503 397h1V410h-1zM504 397h1V410h-1zM505 397h1V410h-1zM506 397h1V410h-1zM507 397h1V410h-1zM508 397h1V410h-1zM509 397h1V410h-1zM510 397h1V410h-1zM511 397h1V410h-1zM512 384h1V410h-1zM513 397h1V410h-1zM514 397h1V410h-1zM515 397h1V410h-1zM516 397h1V410h-1zM517 397h1V410h-1zM518 397h1V410h-1zM519 397h1V410h-1zM520 397h1V410h-1zM521 334h1V410h-1zM522 334h1V410h-1zM523 334h1V410h-1zM524 359h1V410h-1zM525 397h1V410h-1zM526 397h1V410h-1zM527 372h1V410h-1zM528 397h1V410h-1zM529 397h1V410h-1zM530 397h1V410h-1zM531 397h1V410h-1zM532 384h1V410h-1zM533 397h1V410h-1zM534 397h1V410h-1zM535 397h1V410h-1zM536 397h1V410h-1zM537 384h1V410h-1zM538 397h1V410h-1zM539 384h1V410h-1zM540 397h1V410h-1zM541 397h1V410h-1zM542 397h1V410h-1zM543 384h1V410h-1zM544 397h1V410h-1zM545 397h1V410h-1zM546 384h1V410h-1zM547 397h1V410h-1zM548 397h1V410h-1zM549 384h1V410h-1zM550 397h1V410h-1zM551 384h1V410h-1zM552 384h1V410h-1zM553 397h1V410h-1zM554 384h1V410h-1zM555 384h1V410h-1zM556 397h1V410h-1zM557 397h1V410h-1zM558 397h1V410h-1zM559 384h1V410h-1zM560 397h1V410h-1zM561 397h1V410h-1zM562 397h1V410h-1zM563 372h1V410h-1zM564 397h1V410h-1zM565 397h1V410h-1zM566 384h1V410h-1zM567 359h1V410h-1zM568 359h1V410h-1zM569 347h1V410h-1zM570 334h1V410h-1zM571 334h1V410h-1zM572 347h1V410h-1zM573 359h1V410h-1zM574 384h1V410h-1zM575 384h1V410h-1zM576 384h1V410h-1zM577 384h1V410h-1zM578 384h1V410h-1zM579 384h1V410h-1zM580 384h1V410h-1zM581 384h1V410h-1zM582 372h1V410h-1zM583 384h1V410h-1zM584 372h1V410h-1zM585 384h1V410h-1zM586 309h1V410h-1zM587 322h1V410h-1zM588 322h1V410h-1zM589 359h1V410h-1zM590 359h1V410h-1zM591 359h1V410h-1zM592 359h1V410h-1z"/><polyline points="190.5,312.5 191.5,314.5 192.5,315.5 193.5,311.5 194.5,312.5 195.5,306.5 196.5,306.5 197.5,310.5 198.5,307.5 199.5,309.5 200.5,302.5 201.5,309.5 202.5,306.5 203.5,311.5 204.5,311.5 205.5,310.5 206.5,303.5 207.5,311.5 208.5,304.5 209.5,311.5 210.5,305.5 211.5,303.5 212.5,310.5 213.5,302.5 214.5,307.5 215.5,308.5 216.5,299.5 217.5,301.5 218.5,301.5 219.5,303.5 220.5,302.5 221.5,308.5 222.5,312.5 223.5,310.5 224.5,307.5 225.5,303.5 226.5,308.5 227.5,310.5 228.5,300.5 229.5,304.5 230.5,301.5 231.5,309.5 232.5,308.5 233.5,299.5 234.5,299.5 235.5,310.5 236.5,303.5 237.5,300.5 238.5,313.5 239.5,304.5 240.5,304.5 241.5,310.5 242.5,304.5 243.5,299.5 244.5,300.5 245.5,305.5 246.5,311.5 247.5,309.5 248.5,304.5 249.5,312.5 250.5,302.5 251.5,311.5 252.5,313.5 253.5,310.5 254.5,300.5 255.5,309.5 256.5,298.5 257.5,301.5 258.5,305.5 259.5,311.5 260.5,298.5 261.5,309.5 262.5,312.5 263.5,303.5 264.5,298.5 265.5,311.5 266.5,313.5 267.5,312.5 268.5,312.5 269.5,311.5 270.5,314.5 271.5,303.5 272.5,309.5 273.5,304.5 274.5,303.5 275.5,301.5 276.5,313.5 277.5,300.5 278.5,314.5 279.5,310.5 280.5,303.5 281.5,312.5 282.5,305.5 283.5,310.5 284.5,300.5 285.5,306.5 286.5,313.5 287.5,306.5 288.5,311.5 289.5,312.5 290.5,315.5 291.5,305.5 292.5,311.5 293.5,316.5 294.5,298.5 295.5,301.5 296.5,310.5 297.5,302.5 298.5,304.5 299.5,312.5 300.5,318.5 301.5,301.5 302.5,318.5 303.5,302.5 304.5,311.5 305.5,304.5 306.5,298.5 307.5,298.5 308.5,314.5 309.5,302.5 310.5,317.5 311.5,315.5 312.5,317.5 313.5,318.5 314.5,317.5 315.5,305.5 316.5,316.5 317.5,301.5 318.5,306.5 319.5,317.5 320.5,320.5 321.5,306.5 322.5,305.5 323.5,314.5 324.5,303.5 325.5,318.5 326.5,315.5 327.5,305.5 328.5,303.5 329.5,315.5 330.5,307.5 331.5,312.5 332.5,303.5 333.5,302.5 334.5,312.5 335.5,305.5 336.5,314.5 337.5,321.5 338.5,303.5 339.5,315.5 340.5,304.5 341.5,307.5 342.5,304.5 343.5,319.5 344.5,307.5 345.5,319.5 346.5,315.5 347.5,306.5 348.5,318.5 349.5,316.5 350.5,309.5 351.5,314.5 352.5,314.5 353.5,307.5 354.5,308.5 355.5,308.5 356.5,306.5 357.5,315.5 358.5,306.5 359.5,318.5 360.5,308.5 361.5,309.5 362.5,315.5 363.5,307.5 364.5,315.5 365.5,309.5 366.5,320.5 367.5,310.5 368.5,316.5 369.5,319.5 370.5,310.5 371.5,310.5 372.5,319.5 373.5,320.5 374.5,316.5 375.5,321.5 376.5,310.5 377.5,310.5 378.5,324.5 379.5,308.5 380.5,318.5 381.5,319.5 382.5,308.5 383.5,309.5 384.5,319.5 385.5,312.5 386.5,323.5 387.5,314.5 388.5,312.5 389.5,322.5 390.5,321.5 391.5,311.5 392.5,311.5 393.5,309.5 394.5,310.5 395.5,309.5 396.5,313.5 397.5,314.5 398.5,313.5 399.5,311.5 400.5,310.5 401.5,309.5 402.5,312.5 403.5,313.5 404.5,320.5 405.5,308.5 406.5,327.5 407.5,320.5 408.5,313.5 409.5,322.5 410.5,314.5 411.5,310.5 412.5,315.5 413.5,316.5 414.5,315.5 415.5,315.5 416.5,322.5 417.5,310.5 418.5,316.5 419.5,326.5 420.5,322.5 421.5,312.5 422.5,322.5 423.5,326.5 424.5,323.5 425.5,316.5 426.5,318.5 427.5,316.5 428.5,317.5 429.5,313.5 430.5,326.5 431.5,323.5 432.5,314.5 433.5,324.5 434.5,330.5 435.5,328.5 436.5,317.5 437.5,325.5 438.5,318.5 439.5,323.5 440.5,317.5 441.5,325.5 442.5,313.5 443.5,324.5 444.5,319.5 445.5,318.5 446.5,319.5 447.5,317.5 448.5,315.5 449.5,315.5 450.5,320.5 451.5,329.5 452.5,320.5 453.5,317.5 454.5,326.5 455.5,318.5 456.5,328.5 457.5,326.5 458.5,318.5 459.5,329.5 460.5,320.5 461.5,329.5 462.5,329.5 463.5,319.5 464.5,327.5 465.5,315.5 466.5,317.5 467.5,327.5 468.5,318.5 469.5,330.5 470.5,317.5 471.5,330.5 472.5,321.5 473.5,326.5 474.5,320.5 475.5,328.5 476.5,319.5 477.5,327.5 478.5,323.5 479.5,320.5 480.5,327.5 481.5,319.5 482.5,328.5 483.5,322.5 484.5,330.5 485.5,331.5 486.5,318.5 487.5,320.5 488.5,328.5 489.5,320.5 490.5,322.5 491.5,320.5 492.5,331.5 493.5,322.5 494.5,329.5 495.5,332.5 496.5,333.5 497.5,324.5 498.5,331.5 499.5,322.5 500.5,323.5 501.5,321.5 502.5,323.5 503.5,323.5 504.5,329.5 505.5,319.5 506.5,331.5 507.5,321.5 508.5,331.5 509.5,333.5 510.5,330.5 511.5,324.5 512.5,335.5 513.5,325.5 514.5,332.5 515.5,332.5 516.5,325.5 517.5,333.5 518.5,330.5 519.5,326.5 520.5,325.5 521.5,322.5 522.5,323.5 523.5,332.5 524.5,324.5 525.5,326.5 526.5,330.5 527.5,333.5 528.5,325.5 529.5,334.5 530.5,327.5 531.5,326.5 532.5,327.5 533.5,326.5 534.5,332.5 535.5,332.5 536.5,324.5 537.5,326.5 538.5,327.5 539.5,325.5 540.5,327.5 541.5,334.5 542.5,331.5 543.5,326.5 544.5,333.5 545.5,324.5 546.5,333.5 547.5,333.5 548.5,337.5 549.5,326.5 550.5,333.5 551.5,328.5 552.5,335.5 553.5,334.5 554.5,335.5 555.5,323.5 556.5,325.5 557.5,327.5 558.5,338.5 559.5,327.5 560.5,336.5 561.5,336.5 562.5,324.5 563.5,333.5 564.5,324.5 565.5,336.5 566.5,327.5 567.5,324.5 568.5,337.5 569.5,329.5 570.5,329.5 571.5,325.5 572.5,329.5 573.5,336.5 574.5,339.5 575.5,329.5 576.5,329.5 577.5,335.5 578.5,326.5 579.5,328.5 580.5,337.5 581.5,327.5 582.5,338.5 583.5,327.5 584.5,329.5 585.5,337.5 586.5,338.5 587.5,336.5 588.5,330.5 589.5,331.5 590.5,336.5 591.5,329.5" fill="none" stroke="#e0a8e0" stroke-width="1" shape-rendering="crispEdges"/>
<rect x="592" y="283" width="1" height="76" fill="#44d4f8"/>
</svg>
<svg width="661" height="524" style="position:absolute;left:0;top:0"><rect x="185" y="128" width="4" height="1" fill="#000"/><rect x="185" y="144" width="4" height="1" fill="#000"/><rect x="185" y="160" width="4" height="1" fill="#000"/><rect x="185" y="175" width="4" height="1" fill="#000"/><rect x="185" y="191" width="4" height="1" fill="#000"/><rect x="185" y="207" width="4" height="1" fill="#000"/><rect x="185" y="222" width="4" height="1" fill="#000"/><rect x="185" y="238" width="4" height="1" fill="#000"/><rect x="185" y="284" width="4" height="1" fill="#000"/><rect x="185" y="297" width="4" height="1" fill="#000"/><rect x="185" y="309" width="4" height="1" fill="#000"/><rect x="185" y="322" width="4" height="1" fill="#000"/><rect x="185" y="334" width="4" height="1" fill="#000"/><rect x="185" y="347" width="4" height="1" fill="#000"/><rect x="185" y="360" width="4" height="1" fill="#000"/><rect x="185" y="372" width="4" height="1" fill="#000"/><rect x="185" y="384" width="4" height="1" fill="#000"/><rect x="185" y="397" width="4" height="1" fill="#000"/><rect x="624" y="128" width="3" height="1" fill="#000"/><rect x="624" y="135" width="3" height="1" fill="#000"/><rect x="624" y="142" width="3" height="1" fill="#000"/><rect x="624" y="149" width="3" height="1" fill="#000"/><rect x="624" y="156" width="3" height="1" fill="#000"/><rect x="624" y="163" width="3" height="1" fill="#000"/><rect x="624" y="170" width="3" height="1" fill="#000"/><rect x="624" y="177" width="3" height="1" fill="#000"/><rect x="624" y="184" width="3" height="1" fill="#000"/><rect x="624" y="191" width="3" height="1" fill="#000"/><rect x="624" y="198" width="3" height="1" fill="#000"/><rect x="624" y="205" width="3" height="1" fill="#000"/><rect x="624" y="212" width="3" height="1" fill="#000"/><rect x="624" y="219" width="3" height="1" fill="#000"/><rect x="624" y="226" width="3" height="1" fill="#000"/><rect x="624" y="233" width="3" height="1" fill="#000"/><rect x="624" y="240" width="3" height="1" fill="#000"/><rect x="624" y="247" width="3" height="1" fill="#000"/><rect x="190" y="254" width="1" height="3" fill="#000"/><rect x="190" y="410" width="1" height="3" fill="#000"/><rect x="233" y="254" width="1" height="3" fill="#000"/><rect x="233" y="410" width="1" height="3" fill="#000"/><rect x="276" y="254" width="1" height="3" fill="#000"/><rect x="276" y="410" width="1" height="3" fill="#000"/><rect x="319" y="254" width="1" height="3" fill="#000"/><rect x="319" y="410" width="1" height="3" fill="#000"/><rect x="362" y="254" width="1" height="3" fill="#000"/><rect x="362" y="410" width="1" height="3" fill="#000"/><rect x="406" y="254" width="1" height="3" fill="#000"/><rect x="406" y="410" width="1" height="3" fill="#000"/><rect x="449" y="254" width="1" height="3" fill="#000"/><rect x="449" y="410" width="1" height="3" fill="#000"/><rect x="492" y="254" width="1" height="3" fill="#000"/><rect x="492" y="410" width="1" height="3" fill="#000"/><rect x="535" y="254" width="1" height="3" fill="#000"/><rect x="535" y="410" width="1" height="3" fill="#000"/><rect x="578" y="254" width="1" height="3" fill="#000"/><rect x="578" y="410" width="1" height="3" fill="#000"/><rect x="622" y="254" width="1" height="3" fill="#000"/><rect x="622" y="410" width="1" height="3" fill="#000"/></svg>
<div class="ax" style="left:145px;top:122px;width:40px;text-align:right">400</div><div class="ax" style="left:145px;top:138px;width:40px;text-align:right">350</div><div class="ax" style="left:145px;top:154px;width:40px;text-align:right">300</div><div class="ax" style="left:145px;top:169px;width:40px;text-align:right">250</div><div class="ax" style="left:145px;top:185px;width:40px;text-align:right">200</div><div class="ax" style="left:145px;top:201px;width:40px;text-align:right">150</div><div class="ax" style="left:145px;top:216px;width:40px;text-align:right">100</div><div class="ax" style="left:145px;top:232px;width:40px;text-align:right">50</div><div class="ax" style="left:145px;top:278px;width:40px;text-align:right">10</div><div class="ax" style="left:145px;top:291px;width:40px;text-align:right">9</div><div class="ax" style="left:145px;top:303px;width:40px;text-align:right">8</div><div class="ax" style="left:145px;top:316px;width:40px;text-align:right">7</div><div class="ax" style="left:145px;top:328px;width:40px;text-align:right">6</div><div class="ax" style="left:145px;top:341px;width:40px;text-align:right">5</div><div class="ax" style="left:145px;top:354px;width:40px;text-align:right">4</div><div class="ax" style="left:145px;top:366px;width:40px;text-align:right">3</div><div class="ax" style="left:145px;top:378px;width:40px;text-align:right">2</div><div class="ax" style="left:145px;top:391px;width:40px;text-align:right">1</div><div class="ax" style="left:170.0px;top:255px;width:40px;text-align:center">0.0</div><div class="ax" style="left:170.0px;top:411px;width:40px;text-align:center">0.0</div><div class="ax" style="left:213.2px;top:255px;width:40px;text-align:center">2.5</div><div class="ax" style="left:213.2px;top:411px;width:40px;text-align:center">2.5</div><div class="ax" style="left:256.4px;top:255px;width:40px;text-align:center">5.0</div><div class="ax" style="left:256.4px;top:411px;width:40px;text-align:center">5.0</div><div class="ax" style="left:299.6px;top:255px;width:40px;text-align:center">7.5</div><div class="ax" style="left:299.6px;top:411px;width:40px;text-align:center">7.5</div><div class="ax" style="left:342.8px;top:255px;width:40px;text-align:center">10.0</div><div class="ax" style="left:342.8px;top:411px;width:40px;text-align:center">10.0</div><div class="ax" style="left:386.0px;top:255px;width:40px;text-align:center">12.5</div><div class="ax" style="left:386.0px;top:411px;width:40px;text-align:center">12.5</div><div class="ax" style="left:429.20000000000005px;top:255px;width:40px;text-align:center">15.0</div><div class="ax" style="left:429.20000000000005px;top:411px;width:40px;text-align:center">15.0</div><div class="ax" style="left:472.40000000000003px;top:255px;width:40px;text-align:center">17.5</div><div class="ax" style="left:472.40000000000003px;top:411px;width:40px;text-align:center">17.5</div><div class="ax" style="left:515.6px;top:255px;width:40px;text-align:center">20.0</div><div class="ax" style="left:515.6px;top:411px;width:40px;text-align:center">20.0</div><div class="ax" style="left:558.8px;top:255px;width:40px;text-align:center">22.5</div><div class="ax" style="left:558.8px;top:411px;width:40px;text-align:center">22.5</div><div class="ax" style="left:602px;top:255px">25.0 GB</div><div class="ax" style="left:602px;top:411px">25.0 GB</div><div class="ax" style="left:627px;top:122px">18 X</div><div class="ax" style="left:627px;top:136px">16 X</div><div class="ax" style="left:627px;top:150px">14 X</div><div class="ax" style="left:627px;top:164px">12 X</div><div class="ax" style="left:627px;top:178px">10 X</div><div class="ax" style="left:627px;top:192px">8 X</div><div class="ax" style="left:627px;top:206px">6 X</div><div class="ax" style="left:627px;top:220px">4 X</div><div class="ax" style="left:627px;top:234px">2 X</div><div class="ax" style="left:626px;top:277.5px">20%</div><div class="ax" style="left:626px;top:302.7px">16%</div><div class="ax" style="left:626px;top:327.9px">12%</div><div class="ax" style="left:626px;top:353.1px">8%</div><div class="ax" style="left:626px;top:378.3px">4%</div>

<!-- stats -->
<div class="t" style="left:252px;top:431px;letter-spacing:-0.5px">LDC</div>
<div class="t" style="left:311px;top:431px;letter-spacing:-0.5px">BIS</div>
<div class="t" style="left:163px;top:448px">Avg</div>
<div class="t" style="left:163px;top:464px">Max</div>
<div class="t" style="left:161px;top:480px">Total</div>
<div class="t blue" style="left:213px;top:448px;width:60px;text-align:right">2.79</div>
<div class="t blue" style="left:213px;top:464px;width:60px;text-align:right">399</div>
<div class="t blue" style="left:213px;top:480px;width:60px;text-align:right;letter-spacing:-0.3px">1064970</div>
<div class="t blue" style="left:267px;top:448px;width:60px;text-align:right">0.06</div>
<div class="t blue" style="left:267px;top:464px;width:60px;text-align:right">8</div>
<div class="t blue" style="left:267px;top:480px;width:60px;text-align:right;letter-spacing:-0.3px">21432</div>
<div class="a" style="left:395px;top:430px;width:13px;height:13px;border:1px solid #333;background:#fff"></div>
<svg class="a" style="left:396px;top:431px" width="11" height="11"><path d="M1.5 5.5L4.5 8.5L9.5 2" fill="none" stroke="#222" stroke-width="1.2"/></svg>
<div class="t" style="left:417px;top:431px">Jitter</div>
<div class="t blue" style="left:382px;top:448px;width:60px;text-align:right;letter-spacing:-0.2px">14.4%</div>
<div class="t blue" style="left:382px;top:464px;width:60px;text-align:right;letter-spacing:-0.2px">18.1%</div>
<div class="t" style="left:461px;top:436px">Speed</div>
<div class="t blue" style="left:520px;top:436px;letter-spacing:-0.3px">4.19 X</div>
<div class="t" style="left:461px;top:464px">Position</div>
<div class="t blue" style="left:520px;top:464px;letter-spacing:-0.1px">23862 MB</div>
<div class="t" style="left:461px;top:480px">Samples</div>
<div class="t blue" style="left:520px;top:480px;letter-spacing:-0.3px">381468</div>
<div class="btn" style="left:575px;top:428px;width:75px;height:21px;background:#e5e5e5;border-color:#acacac"></div>
<div class="t" style="left:579px;top:434px;font-size:11.5px;letter-spacing:-0.3px">4.0 X</div>
<svg class="a" style="left:637px;top:437px" width="9" height="5"><path d="M0.5 0.5L4.5 4.5L8.5 0.5" fill="none" stroke="#333" stroke-width="1"/></svg>
<div class="btn" style="left:576px;top:452px;width:73px;height:21px"></div>
<div class="t" style="left:576px;top:457px;width:73px;text-align:center;font-size:12px;letter-spacing:-0.1px">Start full</div>
<div class="btn" style="left:575px;top:479px;width:73px;height:21px"></div>
<div class="t" style="left:575px;top:484px;width:73px;text-align:center;font-size:12px;letter-spacing:-0.1px">Start part</div>

<!-- status bar -->
<div class="a" style="left:1px;top:504px;width:659px;height:19px;background:#f0f0f0;border-top:1px solid #dcdcdc"></div>
<div class="t" style="left:4px;top:510px;font-size:11.3px;letter-spacing:-0.25px">Test completed</div>
<div class="a" style="left:141px;top:506px;width:1px;height:16px;background:#d0d0d0"></div>
<div class="a" style="left:146px;top:508px;width:302px;height:13px;background:#06b025;border:1px solid #bcbcbc"></div>
<div class="t" style="left:455px;top:510px;font-size:10.5px;letter-spacing:-0.3px">100.0%</div>
<div class="a" style="left:507px;top:506px;width:1px;height:16px;background:#d0d0d0"></div>
<div class="t" style="left:602px;top:510px;letter-spacing:-0.2px">33:14</div>
<div class="a" style="left:630px;top:506px;width:1px;height:16px;background:#d0d0d0"></div>
<svg class="a" style="left:648px;top:511px" width="11" height="11"><g fill="#b8b8b8"><rect x="8" y="0" width="2" height="2"/><rect x="8" y="4" width="2" height="2"/><rect x="4" y="4" width="2" height="2"/><rect x="8" y="8" width="2" height="2"/><rect x="4" y="8" width="2" height="2"/><rect x="0" y="8" width="2" height="2"/></g></svg>
</body></html>
